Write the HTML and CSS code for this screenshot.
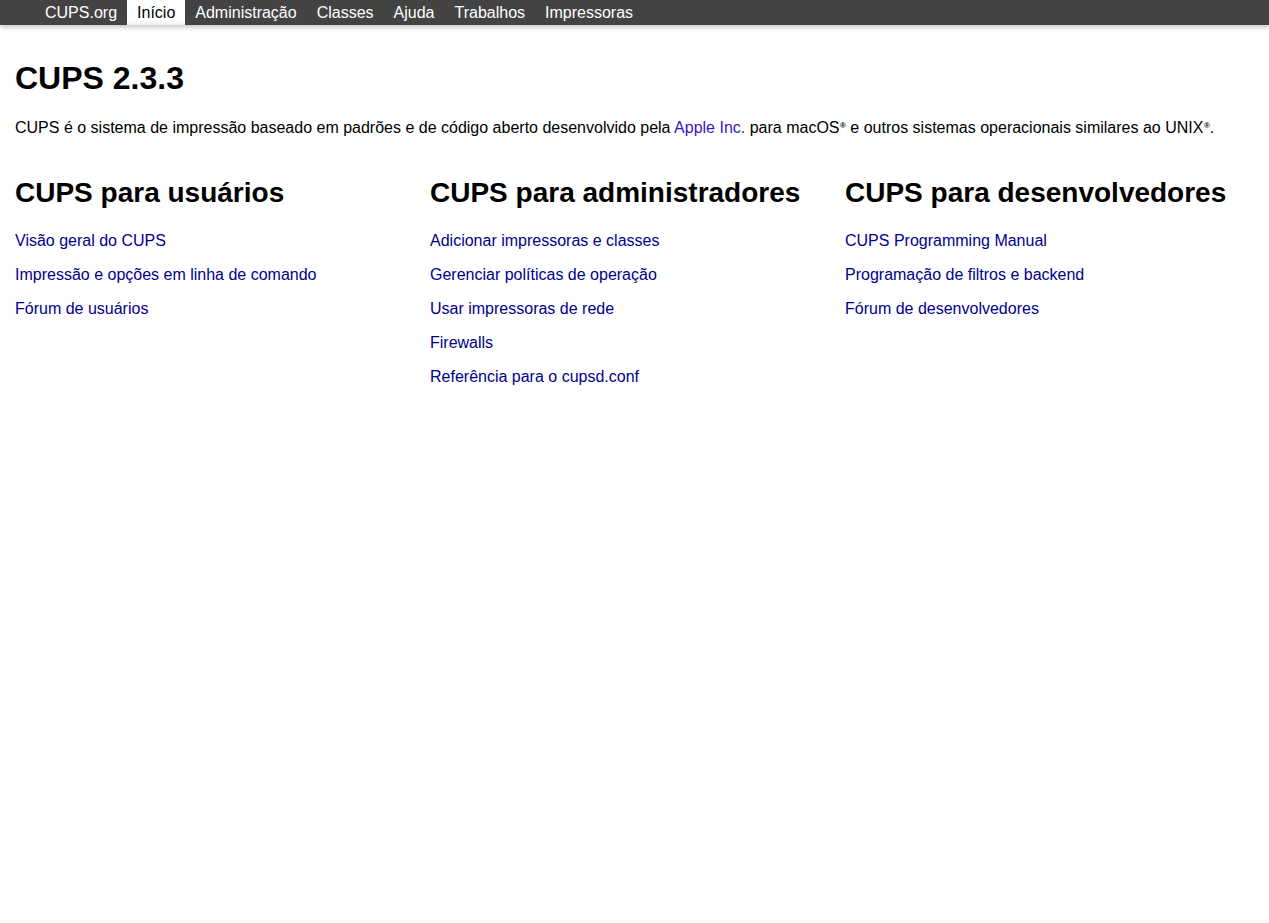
FILE: index.html
```html
<!DOCTYPE html>
<html lang="pt-BR">
<head>
<meta charset="utf-8">
<title>Início - CUPS 2.3.3</title>
<link rel="stylesheet" href="styles.css">
</head>
<body>
<div class="page">
  <div class="header">
    <ul class="nav">
      <li><a href="#">CUPS.org</a></li>
      <li><a class="active" href="#">Início</a></li>
      <li><a href="#">Administração</a></li>
      <li><a href="#">Classes</a></li>
      <li><a href="#">Ajuda</a></li>
      <li><a href="#">Trabalhos</a></li>
      <li><a href="#">Impressoras</a></li>
    </ul>
  </div>
  <div class="body">
    <h1 class="title">CUPS 2.3.3</h1>
    <p class="intro">CUPS é o sistema de impressão baseado em padrões e de código aberto desenvolvido pela <a class="ext" href="#">Apple Inc.</a> para macOS<sup class="reg">®</sup> e outros sistemas operacionais similares ao UNIX<sup class="reg">®</sup>.</p>
    <div class="columns">
      <div class="col">
        <h2 class="col-title">CUPS para usuários</h2>
        <ul class="links">
          <li><a href="#">Visão geral do CUPS</a></li>
          <li><a href="#">Impressão e opções em linha de comando</a></li>
          <li><a href="#">Fórum de usuários</a></li>
        </ul>
      </div>
      <div class="col">
        <h2 class="col-title">CUPS para administradores</h2>
        <ul class="links">
          <li><a href="#">Adicionar impressoras e classes</a></li>
          <li><a href="#">Gerenciar políticas de operação</a></li>
          <li><a href="#">Usar impressoras de rede</a></li>
          <li><a href="#">Firewalls</a></li>
          <li><a href="#">Referência para o cupsd.conf</a></li>
        </ul>
      </div>
      <div class="col">
        <h2 class="col-title">CUPS para desenvolvedores</h2>
        <ul class="links">
          <li><a href="#">CUPS Programming Manual</a></li>
          <li><a href="#">Programação de filtros e backend</a></li>
          <li><a href="#">Fórum de desenvolvedores</a></li>
        </ul>
      </div>
    </div>
  </div>
  <div class="footer"></div>
</div>
</body>
</html>
```
FILE: styles.css
```css
html, body {
  margin: 0;
  padding: 0;
  background: #ffffff;
}
body {
  font-family: "Liberation Sans", Arial, sans-serif;
  font-size: 16px;
  color: #000000;
}
.page {
  min-height: 923px;
  display: flex;
  flex-direction: column;
}
.header {
  height: 25px;
  background: #434343;
  box-shadow: 0 2px 5px rgba(0, 0, 0, 0.25);
  padding-left: 35px;
  position: relative;
  z-index: 2;
}
.nav {
  list-style: none;
  margin: 0;
  padding: 0;
  display: flex;
  height: 25px;
}
.nav li {
  margin: 0;
  padding: 0;
}
.nav a {
  display: block;
  height: 25px;
  line-height: 25px;
  padding: 0 10px;
  color: #ffffff;
  text-decoration: none;
}
.nav a.active {
  background: linear-gradient(#ffffff 0%, #ffffff 80%, #f0f0f0 100%);
  color: #000000;
}
.body {
  flex: 1;
  padding: 33px 15px 0 15px;
}
.title {
  margin: 0;
  font-size: 32px;
  line-height: 40px;
  font-weight: bold;
}
.intro {
  margin: 19px 0 0 0;
  line-height: 22px;
}
.intro .ext {
  color: #3a14c4;
  text-decoration: none;
}
.reg {
  font-size: 8px;
  font-weight: bold;
  line-height: 0;
  vertical-align: 5px;
  padding-left: 0.5px;
}
.columns {
  display: grid;
  grid-template-columns: repeat(3, 415px);
  margin-top: 37px;
}
.col-title {
  margin: 0;
  font-size: 28px;
  line-height: 34px;
  font-weight: bold;
}
.links {
  list-style: none;
  margin: 20px 0 0 0;
  padding: 0;
  display: flex;
  flex-direction: column;
  gap: 12px;
}
.links li {
  line-height: 22px;
}
.links a {
  color: #00008f;
  text-decoration: none;
}
.footer {
  height: 3px;
  background: #f9f9f9;
}
```
